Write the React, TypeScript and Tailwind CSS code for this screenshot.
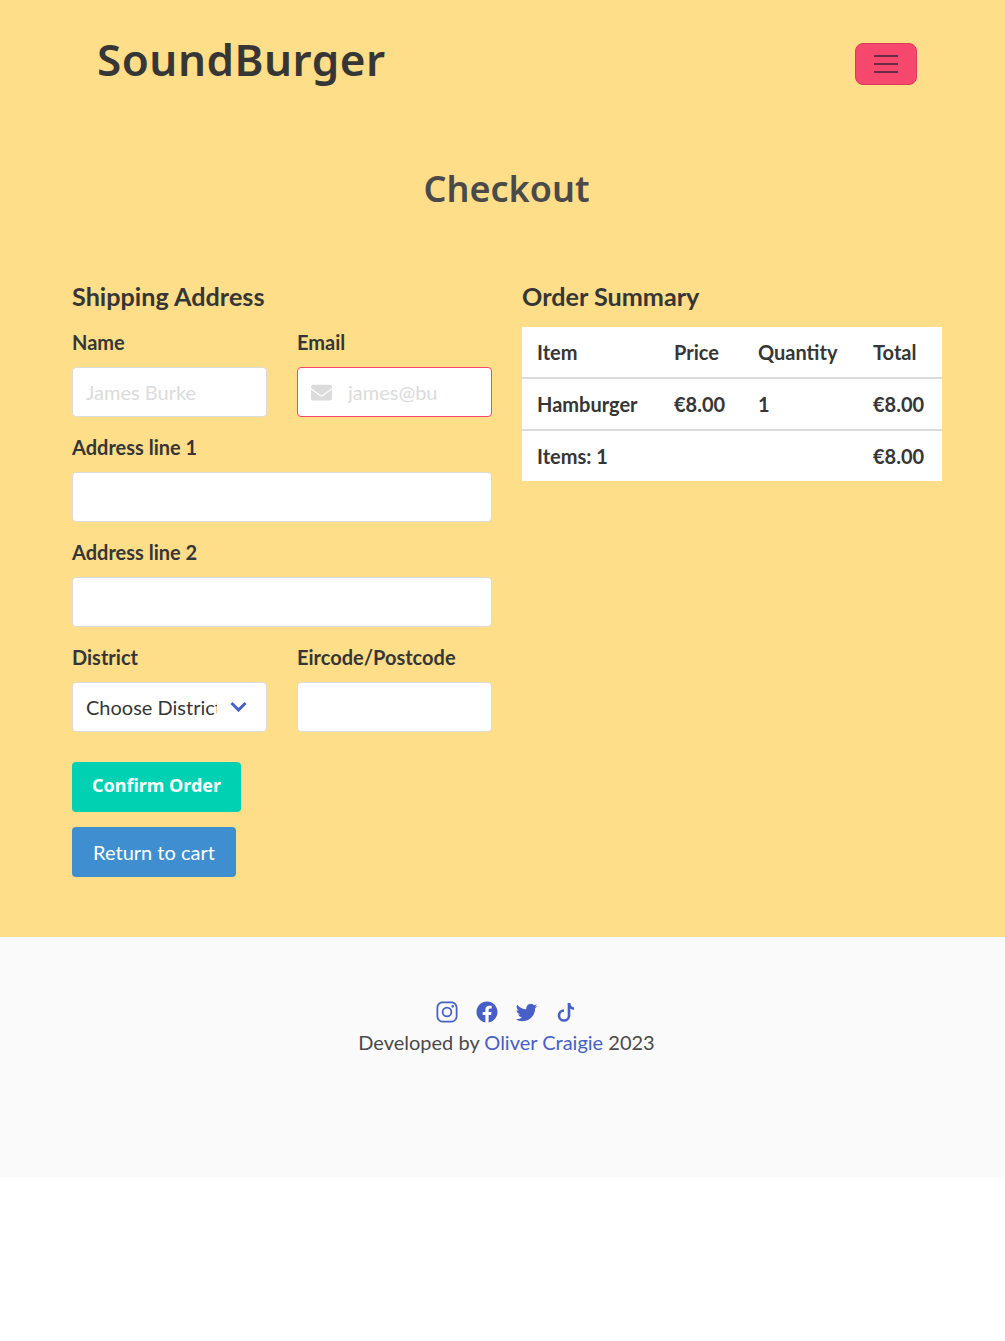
import { FaEnvelope } from 'react-icons/fa';
import { IoLogoFacebook, IoLogoInstagram, IoLogoTwitter } from 'react-icons/io5';

const label = 'block text-[20px] leading-[30px] font-bold text-[#363636]';
const input =
  'block w-full h-[50px] bg-white border border-[#dbdbdb] rounded-[4px] pl-[13px] pr-[50px] text-[20px] outline-none placeholder:text-[#dbdbdb]';
const th = 'px-[15px] text-left text-[20px] font-bold text-[#363636]';

function Field({ name, children }: { name: string; children: React.ReactNode }) {
  return (
    <div className="min-w-0">
      <label className={label}>{name}</label>
      <div className="mt-[10px]">{children}</div>
    </div>
  );
}

export default function App() {
  return (
    <div className="font-['Lato',sans-serif] text-[#363636]">
      <div className="bg-[#ffde89] h-[937px]">
        <nav className="flex justify-between pl-[97px] pr-[88px] h-[128px]">
          <a className="font-['Noto_Sans',sans-serif] font-semibold text-[44px] leading-[60px] mt-[29px] text-[#363636] tracking-[0.5px]">
            SoundBurger
          </a>
          <button
            aria-label="menu"
            className="mt-[43px] w-[62px] h-[42px] bg-[#f6486c] border border-[#d93a60] rounded-[8px] flex flex-col items-center justify-center gap-[6px]"
          >
            <span className="block w-[24px] h-[2px] bg-[#6b2c4a]" />
            <span className="block w-[24px] h-[2px] bg-[#6b2c4a]" />
            <span className="block w-[24px] h-[2px] bg-[#6b2c4a]" />
          </button>
        </nav>

        <h1 className="mt-[37px] pl-[8px] text-center font-['Noto_Sans',sans-serif] font-semibold text-[36px] leading-[48px] text-[#4a4a4a]">
          Checkout
        </h1>

        <div className="mt-[66px] px-[72px] grid grid-cols-[420px_420px] gap-x-[30px]">
          <div>
            <h2 className="text-[25.2px] leading-[34px] font-bold">Shipping Address</h2>
            <div className="mt-[14px] flex flex-col gap-[15px]">
              <div className="grid grid-cols-[195px_195px] gap-x-[30px]">
                <Field name="Name">
                  <input className={input} placeholder="James Burke" />
                </Field>
                <Field name="Email">
                  <div className="relative">
                    <FaEnvelope className="absolute left-[14px] top-[15px] text-[#dbdbdb] text-[21px]" />
                    <input className={input + ' border-[#f6486c] pl-[50px]'} placeholder="james@bu" />
                  </div>
                </Field>
              </div>
              <Field name="Address line 1">
                <input className={input} />
              </Field>
              <Field name="Address line 2">
                <input className={input} />
              </Field>
              <div className="grid grid-cols-[195px_195px] gap-x-[30px]">
                <Field name="District">
                  <div className="relative">
                    <div className="h-[50px] bg-white border border-[#dbdbdb] rounded-[4px] pl-[13px] pr-[49px] flex items-center">
                      <span className="block overflow-hidden whitespace-nowrap text-[20px] text-[#363636]">
                        Choose District
                      </span>
                    </div>
                    <svg
                      className="absolute right-[20px] top-[19px]"
                      width="17"
                      height="11"
                      viewBox="0 0 17 11"
                      fill="none"
                      stroke="#485fc7"
                      strokeWidth="3"
                    >
                      <path d="M1.5 2 L8.5 9 L15.5 2" />
                    </svg>
                  </div>
                </Field>
                <Field name="Eircode/Postcode">
                  <input className={input} />
                </Field>
              </div>
            </div>
            <div className="mt-[30px] flex flex-col items-start gap-[15px]">
              <button className="h-[50px] w-[169px] pb-[4px] bg-[#00d1b2] rounded-[4px] text-white text-[18px] font-['Noto_Sans',sans-serif] font-bold">
                Confirm Order
              </button>
              <button className="h-[50px] w-[164px] bg-[#3e8ed0] rounded-[4px] text-white text-[20px]">
                Return to cart
              </button>
            </div>
          </div>

          <div>
            <h2 className="text-[25.2px] leading-[34px] font-bold">Order Summary</h2>
            <table className="mt-[14px] w-full bg-white border-collapse table-fixed">
              <colgroup>
                <col className="w-[137px]" />
                <col className="w-[84px]" />
                <col className="w-[115px]" />
                <col />
              </colgroup>
              <tbody>
                <tr className="h-[51px] border-b-2 border-[#dbdbdb]">
                  <th className={th}>Item</th>
                  <th className={th}>Price</th>
                  <th className={th}>Quantity</th>
                  <th className={th}>Total</th>
                </tr>
                <tr className="h-[52px] border-b-2 border-[#dbdbdb]">
                  <th className={th}>Hamburger</th>
                  <th className={th}>€8.00</th>
                  <th className={th}>1</th>
                  <th className={th}>€8.00</th>
                </tr>
                <tr className="h-[51px]">
                  <th className={th}>Items: 1</th>
                  <th className={th} />
                  <th className={th} />
                  <th className={th}>€8.00</th>
                </tr>
              </tbody>
            </table>
          </div>
        </div>
      </div>

      <footer className="bg-[#fafafa] h-[240px] pt-[63px] text-center text-[#4a4a4a]">
        <div className="flex justify-center gap-[16px] text-[#485fc7] pl-[8px] h-[24px] items-center">
          <IoLogoInstagram className="w-[24px] h-[24px]" />
          <IoLogoFacebook className="w-[24px] h-[24px]" />
          <IoLogoTwitter className="w-[23px] h-[23px]" />
          <svg width="24" height="24" viewBox="0 0 24 24" fill="none" stroke="#485fc7" strokeWidth="2.6">
            <path d="M15 3 V15.5 a5 5 0 1 1 -5 -5" />
            <path d="M15 3.3 c0.3 3 2 5 5 5.4" />
          </svg>
        </div>
        <p className="text-[20px] leading-[30px] mt-[3px] pl-[8px]">
          Developed by <a className="text-[#485fc7]">Oliver Craigie</a> 2023
        </p>
      </footer>
      <div className="h-[164px] bg-white" />
    </div>
  );
}
